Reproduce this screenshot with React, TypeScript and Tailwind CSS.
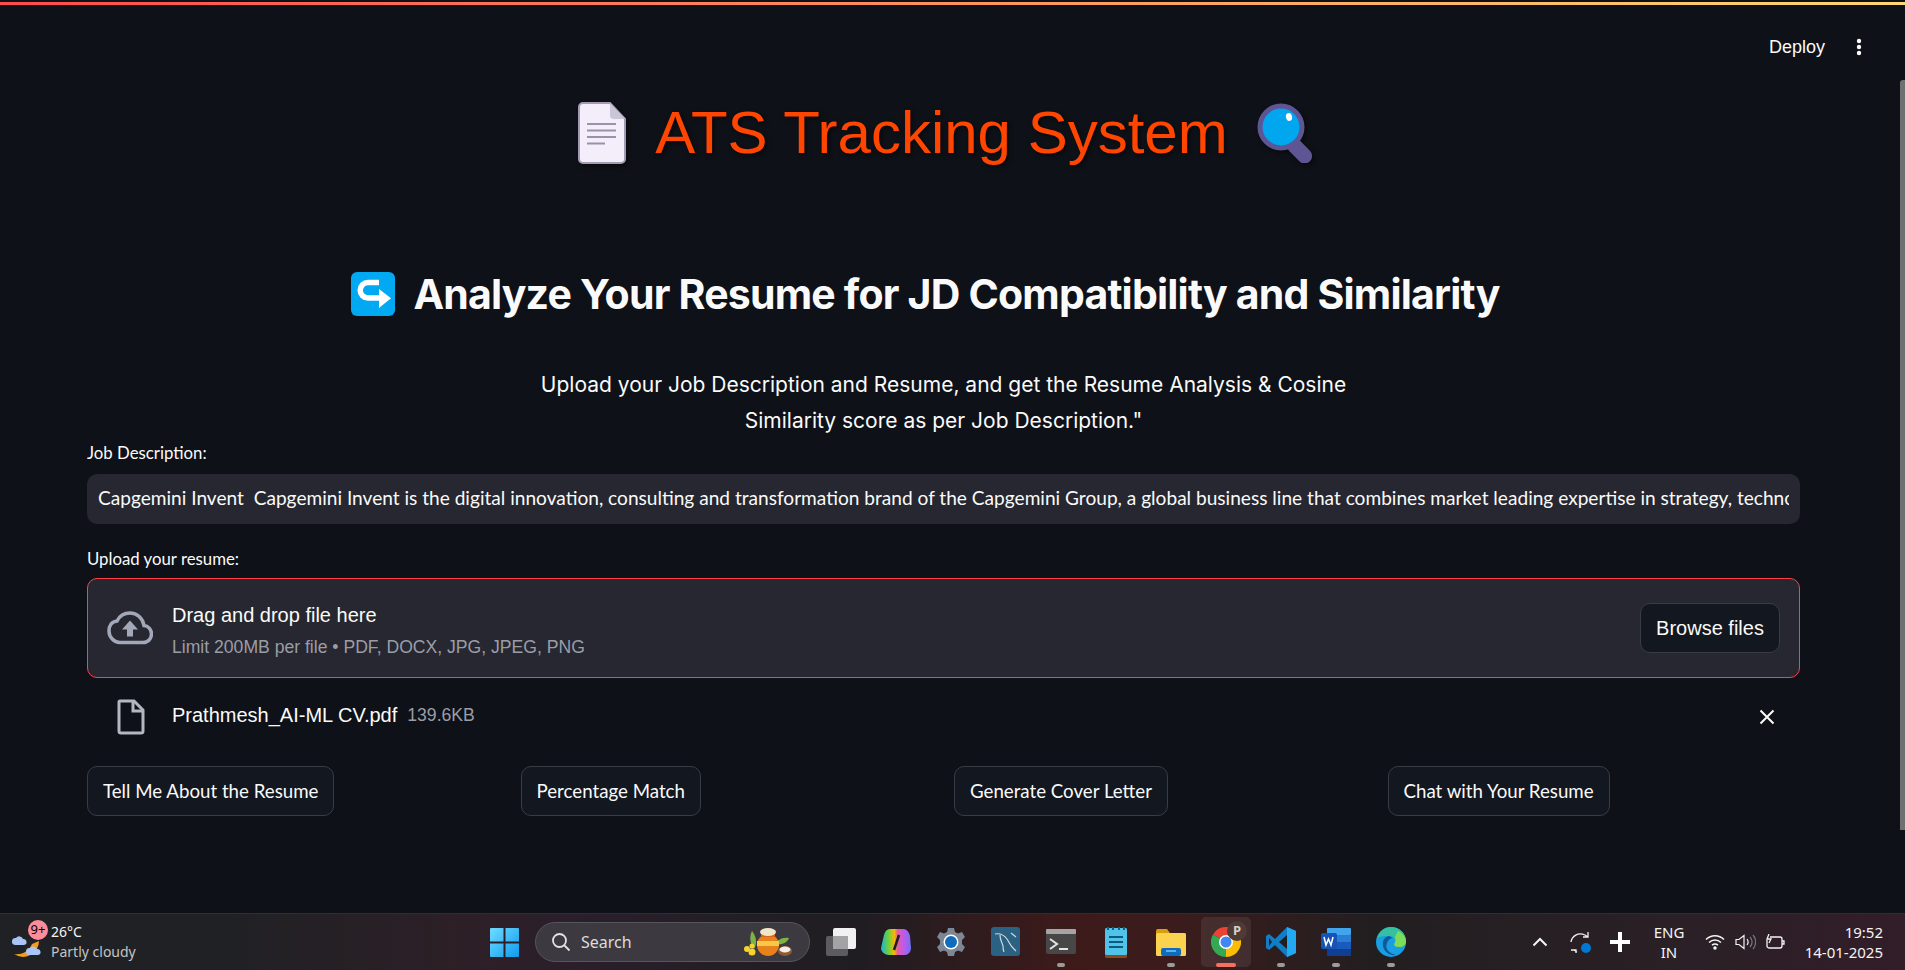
const sans = "font-['Liberation_Sans',Arial,sans-serif]";
const noto = "font-['Noto_Sans',sans-serif]";
const lato = "font-['Lato',sans-serif]";

const DocEmoji = () => (
  <svg width="48" height="62" viewBox="0 0 48 62" className="drop-shadow-[2px_2px_2px_rgba(0,0,0,0.5)]">
    <path d="M5 1h27l15 16v40a4 4 0 0 1-4 4H5a4 4 0 0 1-4-4V5a4 4 0 0 1 4-4z" fill="#f3eefa" stroke="#a39bb3" strokeWidth="2" />
    <path d="M32 1l15 16H36a4 4 0 0 1-4-4z" fill="#cbc5d8" />
    <path d="M9 22h29M9 28.500h29M9 35h29M9 41.500h18" stroke="#9a91aa" strokeWidth="2" />
  </svg>
);

const LensEmoji = () => (
  <svg width="60" height="60" viewBox="0 0 60 60" className="drop-shadow-[2px_2px_2px_rgba(0,0,0,0.5)]">
    <rect x="35" y="34" width="15" height="29" rx="7.500" transform="rotate(-45 42 48)" fill="#5e5594" />
    <circle cx="24" cy="24" r="21" fill="#00a7ee" stroke="#5e5594" strokeWidth="5" />
    <ellipse cx="32" cy="14" rx="3" ry="4" transform="rotate(-15 32 14)" fill="#fff" />
  </svg>
);

const ReturnEmoji = () => (
  <svg width="44" height="44" viewBox="0 0 44 44">
    <rect width="44" height="44" rx="6" fill="#00a9f1" />
    <path d="M28 10.500h-11a7.800 7.800 0 0 0 0 15.600h12" fill="none" stroke="#fff" strokeWidth="5.500" />
    <path d="M28 17l12 9.200-12 9.800z" fill="#fff" />
  </svg>
);

const CloudUpload = () => (
  <svg width="46" height="34" viewBox="0 0 46 34">
    <path d="M37 14.500C35.800 7 30 2 23 2c-5.700 0-10.600 3.200-13 8C4.900 10.500 2 14.600 2 20c0 6 4.900 11.500 11 11.500h23c5 0 8.500-4 8.500-8.500 0-4.700-3.500-8.200-7.500-8.500z" fill="none" stroke="#a3a8b8" strokeWidth="3.500" />
    <path d="M23 9.500l-8 9h5v7h6v-7h5z" fill="#a3a8b8" />
  </svg>
);

const FileIcon = () => (
  <svg width="28" height="36" viewBox="0 0 28 36">
    <path d="M3 2h14l9 9v21a2 2 0 0 1-2 2H4a2 2 0 0 1-2-2V3a1 1 0 0 1 1-1z" fill="none" stroke="#b4b7c1" strokeWidth="3" />
    <path d="M16 2v10h10" fill="none" stroke="#b4b7c1" strokeWidth="3" />
  </svg>
);

const WeatherIcon = () => (
  <svg width="32" height="34" viewBox="0 0 32 34">
    <path d="M28 16a16 16 0 0 1-25 13c6 1 14-1 18-10z" fill="#f39a1f" />
    <path d="M12 14a4 4 0 0 0-7-1 3.500 3.500 0 0 0-1 7h9a3 3 0 0 0-1-6z" fill="#a9c4f5" />
    <path d="M26 24a4 4 0 0 0-7-1 3.500 3.500 0 0 0-1 7h9a3 3 0 0 0-1-6z" fill="#a9c4f5" />
  </svg>
);

const PotIcon = () => (
  <svg width="52" height="30" viewBox="0 0 52 30">
    <path d="M10 4c-3 6-2 12 2 18 3-5 3-12-2-18z" fill="#7cb342" />
    <path d="M35 14c4-3 8-4 12-3-2 5-7 7-12 6z" fill="#7cb342" />
    <circle cx="5" cy="22" r="3" fill="#f6d32d" />
    <circle cx="10" cy="25" r="3.500" fill="#f6d32d" />
    <circle cx="10" cy="19" r="2.500" fill="#f6d32d" />
    <ellipse cx="26" cy="18" rx="11" ry="11" fill="#e8811a" />
    <rect x="15" y="14" width="22" height="5" fill="#f7c948" />
    <rect x="19" y="6" width="14" height="4" fill="#d9661a" />
    <ellipse cx="26" cy="5" rx="8" ry="4" fill="#f2e6c8" />
    <ellipse cx="43" cy="24" rx="7" ry="5" fill="#8d5a34" />
    <ellipse cx="43" cy="22.500" rx="5.500" ry="3" fill="#f4efe6" />
  </svg>
);

const TaskView = () => (
  <svg width="32" height="30" viewBox="0 0 32 30">
    <rect x="1" y="9" width="22" height="20" rx="2" fill="#5c5c5f" />
    <rect x="8" y="1" width="23" height="21" rx="2" fill="#f1f1f3" />
    <rect x="8" y="9" width="15" height="13" fill="#a3a3a6" />
  </svg>
);

const Copilot = () => (
  <svg width="30" height="28" viewBox="0 0 30 28">
    <defs>
      <linearGradient id="cpA" x1="0" y1="0.5" x2="1" y2="0.5">
        <stop offset="0" stopColor="#18b6d9" />
        <stop offset="0.25" stopColor="#6ed13c" />
        <stop offset="0.45" stopColor="#f5b70a" />
        <stop offset="0.55" stopColor="#e85aa8" />
        <stop offset="0.8" stopColor="#b45cf0" />
        <stop offset="1" stopColor="#6d72f3" />
      </linearGradient>
    </defs>
    <path d="M9 1h13c4 0 6 3 7 7l1 12c0 4-3 7-6 7H8c-4 0-8-3-8-7L3 7c1-4 3-6 6-6z" fill="url(#cpA)" />
    <path d="M18 7l-5 15" stroke="#201d24" strokeWidth="2.500" />
  </svg>
);

const Settings = () => (
  <svg width="30" height="30" viewBox="0 0 30 30">
    <path d="M12 1h6l1 4 3 1.500 4-1.500 3 5-3 3v4l3 3-3 5-4-1.500-3 1.500-1 4h-6l-1-4-3-1.500-4 1.500-3-5 3-3v-4l-3-3 3-5 4 1.500 3-1.500z" fill="#7d8794" />
    <circle cx="15" cy="15" r="7.500" fill="#fff" />
    <circle cx="15" cy="15" r="6" fill="#0f6cbd" />
  </svg>
);

const MySql = () => (
  <svg width="30" height="30" viewBox="0 0 30 30">
    <rect width="29" height="29" rx="3" fill="#2b6183" />
    <path d="M4 7c5-1 9 1 12 5 2 3 3 6 6 9M9 8c0 5 2 7 3 11 0 2 0 4 1 6M20 6l5 4M22 21l3 3" fill="none" stroke="#cfd8dc" strokeWidth="1.200" />
  </svg>
);

const Terminal = () => (
  <svg width="30" height="26" viewBox="0 0 30 26">
    <rect width="30" height="25" rx="2" fill="#474747" />
    <rect width="30" height="5" rx="1" fill="#a5a5a5" />
    <path d="M4 10l7 5-7 5" fill="none" stroke="#e4e4e4" strokeWidth="2" />
    <path d="M13 20h9" stroke="#e4e4e4" strokeWidth="2" />
  </svg>
);

const Notepad = () => (
  <svg width="22" height="31" viewBox="0 0 22 31">
    <rect y="1" width="22" height="30" rx="1.500" fill="#8c4a1c" />
    <rect y="1" width="22" height="27" rx="1.500" fill="#4fc3e8" />
    <path d="M3 0v3M8 0v3M14 0v3M19 0v3" stroke="#0f5f8a" strokeWidth="2" />
    <path d="M4 10h14M4 15h14M4 20h14" stroke="#0d5a80" strokeWidth="2" />
  </svg>
);

const Folder = () => (
  <svg width="30" height="27" viewBox="0 0 30 27">
    <path d="M0 2a2 2 0 0 1 2-2h9l3 4h14a2 2 0 0 1 2 2v4H0z" fill="#d79f0c" />
    <rect y="4" width="30" height="23" rx="1.500" fill="#fcd34f" />
    <rect x="5" y="19" width="20" height="8" rx="2" fill="#0f6cbd" />
    <rect x="10" y="21" width="10" height="2" fill="#53b4f0" />
  </svg>
);

const Chrome = () => (
  <div className="relative">
    <svg width="30" height="30" viewBox="0 0 30 30">
      <path d="M15 15L2 7.500A15 15 0 0 1 28 7.500z" fill="#ea4335" />
      <path d="M15 15L28 7.500A15 15 0 0 1 15 30z" fill="#fbbc05" />
      <path d="M15 15L15 30A15 15 0 0 1 2 7.500z" fill="#34a853" />
      <circle cx="15" cy="15" r="7" fill="#fff" />
      <circle cx="15" cy="15" r="5.500" fill="#4285f4" />
    </svg>
    <span className={`absolute -right-[6px] -top-[6px] flex h-[20px] w-[20px] items-center justify-center rounded-full bg-[#4e3a36] text-[13px] font-bold text-[#d8cfc9] ${noto}`}>P</span>
  </div>
);

const VsCode = () => (
  <svg width="30" height="30" viewBox="0 0 30 30">
    <path d="M21 0l9 4v22l-9 4-12-12-6 5-3-2v-12l3-2 6 5z" fill="#0f7ec7" />
    <path d="M21 0l9 4v22l-9 4z" fill="#23a8f2" />
    <path d="M21 8l-8 7 8 7z" fill="#1f1f22" />
    <path d="M3 11l3 4-3 4z" fill="#1f1f22" />
  </svg>
);

const Word = () => (
  <svg width="30" height="28" viewBox="0 0 30 28">
    <rect x="6" y="0" width="24" height="7" rx="1" fill="#41a5ee" />
    <rect x="6" y="7" width="24" height="7" fill="#2b7cd3" />
    <rect x="6" y="14" width="24" height="7" fill="#185abd" />
    <rect x="6" y="21" width="24" height="7" rx="1" fill="#103f91" />
    <rect x="0" y="5" width="16" height="16" rx="2" fill="#1753b5" />
    <path d="M3 9l2 8 2.500-6 2.500 6 2-8" fill="none" stroke="#fff" strokeWidth="1.500" />
  </svg>
);

const Edge = () => (
  <svg width="30" height="30" viewBox="0 0 30 30">
    <circle cx="15" cy="15" r="15" fill="#1b9de2" />
    <path d="M1 12C3 4 9 0 15 0c8 0 15 6 15 14 0 4-3 6-7 6-3 0-5-1-5-3 3-3 0-8-5-8-6 0-11 0-12 3z" fill="#35c1a0" />
    <path d="M22 4c4 2 8 6 8 10 0 4-3 6-7 6-3 0-5-1-5-3 2-2 2-5 1-7z" fill="#7ddc5a" />
    <path d="M13 9c-5 1-7 5-6 10 1 6 7 10 13 9l-3-1c-5-2-8-6-6-11 1-3 3-5 6-5z" fill="#0c5a9e" />
  </svg>
);

const dock = [
  { el: <TaskView /> },
  { el: <Copilot /> },
  { el: <Settings /> },
  { el: <MySql /> },
  { el: <Terminal />, dot: true },
  { el: <Notepad /> },
  { el: <Folder />, dot: true },
  { el: <Chrome />, active: true },
  { el: <VsCode />, dot: true },
  { el: <Word />, dot: true },
  { el: <Edge />, dot: true },
];

const actions = ["Tell Me About the Resume", "Percentage Match", "Generate Cover Letter", "Chat with Your Resume"];

const App = () => {
  return (
    <div className={`relative flex h-[970px] w-[1905px] flex-col overflow-hidden bg-[#0e1117] text-white ${sans}`}>
      <div className="mt-[2px] h-[3px] shrink-0 bg-[linear-gradient(90deg,#ff4b4b,#fdd770)]" />

      <header className="flex h-[85px] shrink-0 items-start justify-end pr-[43px] pt-[30px]">
        <span className="text-[18px] leading-[24px] text-[#fafafa]">Deploy</span>
        <svg className="ml-[31px] mt-[3px]" width="6" height="18" viewBox="0 0 6 18" fill="#fafafa">
          <circle cx="3" cy="3" r="2.200" />
          <circle cx="3" cy="9" r="2.200" />
          <circle cx="3" cy="15" r="2.200" />
        </svg>
      </header>

      <main className="flex flex-1 flex-col pl-[87px] pr-[105px]">
        <div className="mt-[12px] flex h-[62px] items-center justify-center gap-[29px] pl-[8px]">
          <DocEmoji />
          <h1 className="text-[60px] font-normal leading-[62px] text-[#ff4500] [text-shadow:2px_2px_4px_rgba(0,0,0,0.5)]">ATS Tracking System</h1>
          <LensEmoji />
        </div>

        <div className="mt-[108px] flex h-[44px] items-center justify-center gap-[18px] pr-[36px]">
          <ReturnEmoji />
          <h2 className="font-['Inter',sans-serif] text-[41px] font-bold leading-[44px] tracking-[-0.8px] text-[#fafafa]">Analyze Your Resume for JD Compatibility and Similarity</h2>
        </div>

        <p className="mx-auto mt-[51px] w-[860px] text-center font-['Inter',sans-serif] text-[21px] leading-[36px] text-[#fafafa]">
          Upload your Job Description and Resume, and get the Resume Analysis & Cosine
          <br />
          Similarity score as per Job Description."
        </p>

        <label className={`mt-[2px] block text-[16.800px] leading-[24px] text-[#fafafa] ${lato}`}>Job Description:</label>
        <div className={`mt-[9px] flex h-[50px] items-center rounded-[10px] bg-[#262730] px-[11px] pb-[1px] ${lato}`}>
          <div className="overflow-hidden whitespace-pre text-[19.100px] text-[#fafafa]">Capgemini Invent  Capgemini Invent is the digital innovation, consulting and transformation brand of the Capgemini Group, a global business line that combines market leading expertise in strategy, technology, data science and creative design</div>
        </div>

        <label className={`mt-[23px] block text-[16.800px] leading-[24px] text-[#fafafa] ${lato}`}>Upload your resume:</label>
        <div className="mt-[7px] flex h-[100px] items-center rounded-[10px] border-[1.500px] border-[#ff4048] bg-[#262730] pl-[19px] pr-[19px]">
          <CloudUpload />
          <div className="ml-[19px] flex-1 pt-[3px]">
            <div className="text-[20px] leading-[28px] text-[#fafafa]">Drag and drop file here</div>
            <div className="mt-[6px] text-[17.600px] leading-[24px] text-[#9b9da6]">Limit 200MB per file • PDF, DOCX, JPG, JPEG, PNG</div>
          </div>
          <button className="h-[50px] w-[140px] rounded-[10px] border border-[#3a3c45] bg-[#13171f] text-[20px] text-[#fafafa]">Browse files</button>
        </div>

        <div className="mt-[21px] flex h-[36px] items-center pl-[30px] pr-[24px]">
          <FileIcon />
          <span className="ml-[27px] pb-[4px] text-[20px] text-[#fafafa]">Prathmesh_AI-ML CV.pdf</span>
          <span className="ml-[10px] pb-[4px] text-[17.600px] text-[#9b9da6]">139.6KB</span>
          <svg className="ml-auto" width="18" height="18" viewBox="0 0 18 18">
            <path d="M2.500 2.500l13 13M15.500 2.500l-13 13" stroke="#fafafa" strokeWidth="2" />
          </svg>
        </div>

        <div className="mt-[31px] grid grid-cols-4 gap-[21px]">
          {actions.map((a) => (
            <div key={a}>
              <button className={`h-[50px] rounded-[10px] border border-[#3a3c45] bg-[#13171f] px-[15px] text-[18.700px] text-[#fafafa] ${lato}`}>{a}</button>
            </div>
          ))}
        </div>
      </main>

      <div className="absolute right-0 top-[80px] h-[750px] w-[5px] rounded-tl-[3px] bg-[#6f7072]" />

      <footer className={`flex h-[57px] shrink-0 items-center border-t border-[#2c2f36] bg-[linear-gradient(90deg,#202124_0%,#202124_12%,#2e1f27_25%,#2a1f2b_30%,#1f1d22_45%,#3d1a1a_56%,#3b1c1c_62%,#221e20_72%,#2a2026_88%,#321d28_100%)] ${noto}`}>
        <div className="flex w-[490px] shrink-0 items-center pl-[11px]">
          <div className="relative">
            <WeatherIcon />
            <span className="absolute -right-[5px] -top-[5px] flex h-[20px] w-[20px] items-center justify-center rounded-full bg-[#ff8c9a] text-[13px] text-black">9+</span>
          </div>
          <div className="ml-[8px] text-[14px] leading-[20px]">
            <div className="text-[#f4f4f4]">26°C</div>
            <div className="text-[#c4c4c4]">Partly cloudy</div>
          </div>
        </div>

        <svg width="29" height="29" viewBox="0 0 29 29" className="shrink-0">
          <defs>
            <linearGradient id="win" x1="0" y1="0" x2="1" y2="1">
              <stop offset="0" stopColor="#6fdcff" />
              <stop offset="1" stopColor="#0f9bf0" />
            </linearGradient>
          </defs>
          <path d="M0 1a1 1 0 0 1 1-1h12.500v13.500H0zM15.500 0H28a1 1 0 0 1 1 1v12.500H15.500zM0 15.500h13.500V29H1a1 1 0 0 1-1-1zM15.500 15.500H29V28a1 1 0 0 1-1 1H15.500z" fill="url(#win)" />
        </svg>

        <div className="ml-[16px] flex h-[40px] w-[275px] shrink-0 items-center rounded-full border border-[#55555a] bg-[#3c3a40] pl-[15px] pr-[15px]">
          <svg width="20" height="20" viewBox="0 0 20 20" fill="none" stroke="#e2e2e2" strokeWidth="1.800">
            <circle cx="8.500" cy="8.500" r="6.500" />
            <path d="M13.500 13.500l5 5" />
          </svg>
          <span className="ml-[10px] text-[16px] text-[#dcdcdc]">Search</span>
          <div className="ml-auto"><PotIcon /></div>
        </div>

        <div className="ml-[6px] flex h-full items-center">
          {dock.map((d, i) => (
            <div key={i} className={`relative flex h-[50px] w-[50px] items-center justify-center ${i === 0 ? "" : "ml-[5px]"} ${d.active ? "rounded-[5px] bg-[#ffffff14]" : ""}`}>
              {d.el}
              {d.dot && <span className="absolute bottom-0 h-[4px] w-[8px] rounded-full bg-[#9b9b9b]" />}
              {d.active && <span className="absolute bottom-0 h-[4px] w-[20px] rounded-full bg-[#f7705f]" />}
            </div>
          ))}
        </div>

        <div className="ml-auto flex items-center pr-[22px] text-[#f4f4f4]">
          <svg width="16" height="10" viewBox="0 0 16 10" fill="none" stroke="#f4f4f4" strokeWidth="2">
            <path d="M1.500 8.500L8 2l6.500 6.500" />
          </svg>
          <div className="relative ml-[22px]">
            <svg width="20" height="22" viewBox="0 0 20 22" fill="none" stroke="#f0f0f0" strokeWidth="1.300">
              <path d="M1 11C2 5 8 1 15 4l3 2M18 1v5h-5" />
              <path d="M4 19l3 2M1 19h5v3" />
            </svg>
            <span className="absolute -right-[1px] bottom-0 h-[10px] w-[10px] rounded-full bg-[#0078d4]" />
          </div>
          <svg className="ml-[20px]" width="20" height="20" viewBox="0 0 20 20" fill="#fff">
            <path d="M8 0h4v8h8v4h-8v8H8v-8H0V8h8z" />
          </svg>
          <div className="ml-[16px] w-[46px] text-center text-[15px] leading-[20px]">
            <div>ENG</div>
            <div>IN</div>
          </div>
          <svg className="ml-[13px]" width="20" height="16" viewBox="0 0 20 16" fill="none" stroke="#f4f4f4" strokeWidth="1.500">
            <path d="M1 5.500c5-5 13-5 18 0M4 8.500c3.500-3.300 8.500-3.300 12 0M7 11.200c2-1.600 4-1.600 6 0" />
            <circle cx="10" cy="14" r="1" fill="#f4f4f4" />
          </svg>
          <svg className="ml-[10px]" width="21" height="16" viewBox="0 0 21 16" fill="none" stroke="#f4f4f4" strokeWidth="1.200">
            <path d="M1 5.500h3l5-4v13l-5-4H1z" />
            <path d="M12 5c1.500 2 1.500 4 0 6" />
            <path d="M15 3c2.500 3 2.500 7 0 10M18 1c3.500 4 3.500 10 0 14" stroke="#77757a" />
          </svg>
          <svg className="ml-[9px]" width="20" height="16" viewBox="0 0 20 16" fill="none" stroke="#f4f4f4" strokeWidth="1.300">
            <path d="M5 3h10a2 2 0 0 1 2 2v7a2 2 0 0 1-2 2H4a2 2 0 0 1-2-2V6" />
            <path d="M17 7h2v3h-2" />
            <path d="M4 0L2 5h4L4 9" />
          </svg>
          <div className="ml-[8px] w-[90px] text-right text-[15px] leading-[20px]">
            <div>19:52</div>
            <div>14-01-2025</div>
          </div>
        </div>
      </footer>
    </div>
  );
};

export default App;
